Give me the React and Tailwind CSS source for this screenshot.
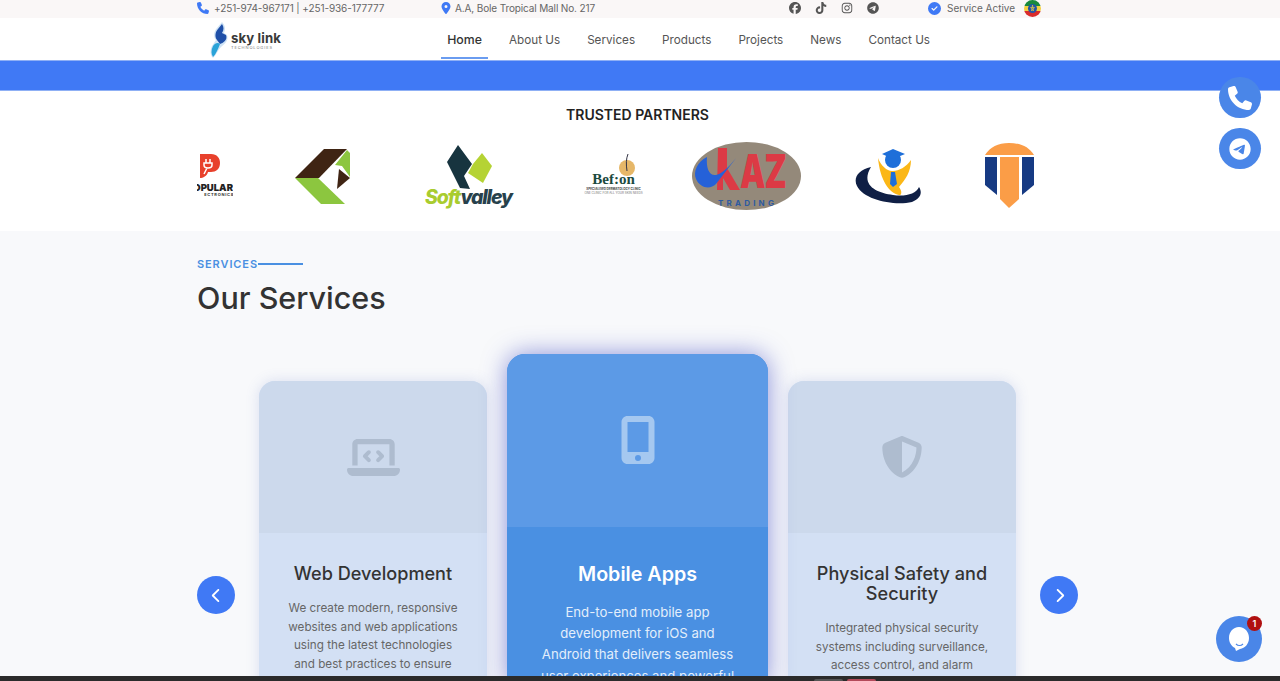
import { FaPhone, FaLocationDot, FaFacebook, FaTiktok, FaInstagram, FaTelegram, FaCircleCheck, FaLaptopCode, FaMobileScreenButton, FaShieldHalved, FaChevronLeft, FaChevronRight } from 'react-icons/fa6'

const navLinks = ['About Us', 'Services', 'Products', 'Projects', 'News', 'Contact Us']

function SkyLinkLogo() {
    return (
        <div className="flex items-center ml-[13px] w-[72px] pt-[2px]">
            <svg width="19" height="37" viewBox="0 0 19 37" className="shrink-0">
                <path d="M12 0 C15 3 16 7 14 11 L17 13 C19 18 15 22 11 25 C8 28 6 33 3 36 C0 33 0 28 2 24 L6 18 C3 15 4 9 7 6 Z" fill="#cfe3f5" />
                <path d="M12 2 C14 5 14 8 12 11 L16 13 C18 18 13 21 10 22 L7 18 C4 14 6 9 8 7 Z" fill="#1f4fa8" />
                <path d="M10 22 C8 27 6 32 3 35 C1 32 1 28 3 24 C5 21 8 20 10 22 Z" fill="#2aa3d8" />
            </svg>
            <div className="flex flex-col ml-[2px]">
                <span className="text-[13.2px] leading-[14px] font-bold text-[#3a3a3a] whitespace-nowrap tracking-[0.1px]">sky link</span>
                <span className="text-[4px] leading-[5px] tracking-[0.9px] text-[#777] whitespace-nowrap">TECHNOLOGIES</span>
            </div>
        </div>
    )
}

function PopularLogo() {
    return (
        <div className="relative w-[36px] h-[44px] overflow-hidden shrink-0">
            <svg width="20" height="24" viewBox="0 0 20 24" className="absolute left-[3px] top-0">
                <path d="M0 0 H11 C17 0 20 4 20 9 C20 15 16 18 11 18 L8 18 C7 22 3 24 0 24 Z" fill="#e8412c" />
                <path d="M6 5 V9 M10 5 V9 M4 9 H12 V11 C12 13 10 14 8 14 C6 14 4 13 4 11 Z M7 14 L4 20" stroke="#fff" strokeWidth="1.5" fill="none" />
            </svg>
            <span className="absolute right-0 top-[29px] text-[9.5px] leading-[9px] font-black text-[#222] whitespace-nowrap">OPULAR</span>
            <span className="absolute right-[-1px] top-[38px] text-[4px] leading-[5px] font-bold tracking-[0.7px] text-[#333] whitespace-nowrap">ECTRONICS</span>
        </div>
    )
}

function GreenLogo() {
    return (
        <svg width="56" height="57" viewBox="295 148 56 57" className="shrink-0">
            <polygon points="295,178 324,149 347,149 319,178" fill="#3f2413" />
            <polygon points="295,178 318,178 345,204 321,204" fill="#8cc63f" />
            <polygon points="347,150 350,153 350,177 342,166 335,165" fill="#8cc63f" />
            <polygon points="339,169 350,178 337,189" fill="#3f2413" />
        </svg>
    )
}

function SoftValleyLogo() {
    return (
        <div className="relative w-[88px] h-[65px] shrink-0">
            <svg width="88" height="46" viewBox="425 143 88 46" className="absolute left-0 top-0">
                <polygon points="458,144 472,163 464,175 470,188 460,187 447,161" fill="#17343f" />
                <polygon points="482,152 492,165 483,182 468,172 473,163" fill="#b5d334" />
            </svg>
            <span className="absolute left-0 top-[41px] text-[19.5px] leading-[24px] font-extrabold italic tracking-[-1.2px] whitespace-nowrap">
                <span className="text-[#a9cc2f]">Soft</span><span className="text-[#27414c]">valley</span>
            </span>
        </div>
    )
}

function BefonLogo() {
    return (
        <div className="relative w-[61px] h-[44px] flex flex-col items-center shrink-0">
            <svg width="20" height="22" viewBox="0 0 20 22" className="absolute left-[34px] top-0">
                <circle cx="10" cy="14" r="8" fill="#e6b768" />
                <path d="M11 0 C9 5 9 10 10 17" stroke="#334" strokeWidth="1" fill="none" />
            </svg>
            <span className="relative mt-[18px] text-[15px] leading-[15px] font-bold text-[#1c4a3f] font-['Liberation_Serif',serif] whitespace-nowrap">Bef:on</span>
            <span className="text-[3px] leading-[4px] font-bold text-[#444] whitespace-nowrap">SPECIALISED DERMATOLOGY CLINIC</span>
            <span className="text-[3px] leading-[4px] text-[#777] whitespace-nowrap">ONE CLINIC FOR ALL YOUR SKIN NEEDS</span>
        </div>
    )
}

function UazLogo() {
    return (
        <div className="relative w-[109px] h-[68px] rounded-[50%] overflow-hidden bg-[#94897a] shrink-0">
            <svg width="109" height="68" viewBox="0 0 109 68" className="absolute inset-0">
                <polygon points="26,6 35,6 35,26 48,48 38,48 31,36 31,48 25,48" fill="#dc3a45" />
                <path d="M15 15 C5 20 1 30 4 37 C8 46 18 48 24 42 L48 11 C38 24 30 32 24 33 C17 34 14 26 15 15 Z" fill="#2561d8" />
            </svg>
            <span className="absolute left-[48px] top-[15px] text-[32px] leading-[30px] font-black text-[#dc3a45] tracking-[-1px] whitespace-nowrap scale-y-[1.45]">AZ</span>
            <span className="absolute left-[26px] top-[56px] text-[8px] leading-[10px] font-bold tracking-[3.2px] text-[#2d5aa0] whitespace-nowrap">TRADING</span>
        </div>
    )
}

function GradLogo() {
    return (
        <svg width="67" height="57" viewBox="855 148 67 57" className="shrink-0">
            <path d="M871 167 C858 170 853 178 857 186 C864 200 894 206 912 202 C920 199 923 193 919 187 C916 194 905 197 893 195 C876 193 860 185 871 167 Z" fill="#0f1f45" />
            <path d="M878 158 C881 166 888 172 893 171 C899 171 906 167 911 160 C911 172 905 180 899 187 C903 192 901 196 899 195 C889 193 880 180 878 158 Z" fill="#fbb717" />
            <circle cx="893" cy="160" r="8" fill="#1e6fd9" />
            <polygon points="882,154 893,149 905,154 893,159" fill="#1e6fd9" />
            <polygon points="891,172 895,172 897,184 893,187 890,184" fill="#1e6fd9" />
        </svg>
    )
}

function TLogo() {
    return (
        <svg width="51" height="66" viewBox="984 143 51 66" className="shrink-0">
            <path d="M985 155 C990 147 998 143 1009 143 C1021 143 1029 147 1034 155 Z" fill="#fb9d47" />
            <polygon points="985,157 997,157 997,195 985,185" fill="#163a83" />
            <polygon points="1022,157 1034,157 1034,185 1022,195" fill="#163a83" />
            <polygon points="1000,157 1019,157 1019,199 1009,208 1000,199" fill="#fb9d47" />
        </svg>
    )
}

function ServiceCard({ icon, title, lines }) {
    return (
        <div className="w-[228px] mt-[27px] h-[330px] rounded-t-[16px] overflow-hidden bg-[#d3e0f4] shadow-[0_0_14px_rgba(80,100,190,0.18)] shrink-0">
            <div className="h-[152px] bg-[#ccd9ec] flex items-center justify-center text-[#aebccf]">
                {icon}
            </div>
            <div className="px-[20px] pt-[30px] flex flex-col items-center text-center">
                <h3 className="text-[18.1px] leading-[20px] font-medium text-[#333]">{title}</h3>
                <p className="mt-[16px] text-[11.7px] leading-[18.6px] text-[#666] whitespace-nowrap">
                    {lines.map((line) => <span key={line} className="block">{line}</span>)}
                </p>
            </div>
        </div>
    )
}

export default function App() {
    return (
        <div className="relative w-[1280px] h-[681px] overflow-hidden bg-white font-['Inter',sans-serif]">
            <main className="h-[676px] overflow-hidden">
                {/* Top bar */}
                <div className="h-[18px] bg-[#faf7f7] flex items-center pl-[197px] pb-[2px] text-[10px] text-[#666]">
                    <FaPhone className="text-[#3f79f5] text-[12px]" />
                    <span className="ml-[5px] w-[226px] whitespace-nowrap tracking-[-0.1px]">+251-974-967171 | +251-936-177777</span>
                    <FaLocationDot className="text-[#3f79f5] text-[12px]" />
                    <span className="ml-[3px] w-[334px] whitespace-nowrap tracking-[-0.13px]">A.A, Bole Tropical Mall No. 217</span>
                    <div className="flex items-center gap-[14px] text-[#555] text-[12px]">
                        <FaFacebook />
                        <FaTiktok />
                        <FaInstagram />
                        <FaTelegram />
                    </div>
                    <FaCircleCheck className="ml-[49px] text-[#3f79f5] text-[13px]" />
                    <span className="ml-[6px] w-[77px] whitespace-nowrap">Service Active</span>
                    <svg width="17" height="17" viewBox="0 0 17 17">
                        <clipPath id="flag"><circle cx="8.5" cy="8.5" r="8.5" /></clipPath>
                        <g clipPath="url(#flag)">
                            <rect width="17" height="6" fill="#1a8a3d" />
                            <rect y="6" width="17" height="5" fill="#f4d03f" />
                            <rect y="11" width="17" height="6" fill="#d92b2b" />
                            <circle cx="8.5" cy="8.5" r="4.5" fill="#2456a6" />
                            <path d="M8.5 5 L9.5 11 L6.5 7.5 H10.5 L7.5 11 Z" fill="none" stroke="#f4d03f" strokeWidth="0.6" />
                        </g>
                    </svg>
                </div>

                {/* Nav */}
                <nav className="h-[42px] bg-white flex pl-[197px]">
                    <SkyLinkLogo />
                    <div className="flex ml-[159px] gap-[15px] text-[11.7px] text-[#555]">
                        <a className="w-[47px] flex items-center justify-center h-[41px] pt-[6px] border-b-2 border-[#6a9cf0] text-[12.3px] font-medium text-[#333]">Home</a>
                        {navLinks.map((link) => (
                            <a key={link} className="px-[6px] h-[41px] pt-[4px] flex items-center whitespace-nowrap">{link}</a>
                        ))}
                    </div>
                </nav>

                {/* Blue band */}
                <div className="h-[31px] bg-[#4079f5] border-y border-[#8fb0f5]" />

                {/* Partners */}
                <section className="h-[140px] bg-white pt-[15px]">
                    <h2 className="w-[881px] ml-[197px] text-center text-[14px] leading-[18px] font-semibold text-[#222]">TRUSTED PARTNERS</h2>
                    <div className="flex items-center h-[68px] mt-[18px] pl-[197px]">
                        <PopularLogo />
                        <div className="ml-[62px]"><GreenLogo /></div>
                        <div className="ml-[74px]"><SoftValleyLogo /></div>
                        <div className="ml-[70px]"><BefonLogo /></div>
                        <div className="ml-[48px]"><UazLogo /></div>
                        <div className="ml-[54px]"><GradLogo /></div>
                        <div className="ml-[62px]"><TLogo /></div>
                    </div>
                </section>

                {/* Services */}
                <section className="h-[445px] bg-[#f8f9fb] px-[197px] pt-[26px]">
                    <div className="flex items-center text-[11px] leading-[14px] font-semibold tracking-[0.9px] text-[#4a90e2]">
                        SERVICES
                        <span className="w-[45px] h-[2px] bg-[#4a90e2]" />
                    </div>
                    <h2 className="mt-[7px] text-[30.5px] leading-[40px] font-medium text-[#333]">Our Services</h2>

                    <div className="flex justify-between mt-[36px] w-[881px]">
                        <button className="w-[38px] h-[38px] mt-[222px] rounded-full bg-[#4079f5] flex items-center justify-center text-white text-[15px]">
                            <FaChevronLeft />
                        </button>
                        <div className="flex items-start gap-[20px]">
                            <ServiceCard
                                icon={<FaLaptopCode className="text-[53px]" />}
                                title="Web Development"
                                lines={['We create modern, responsive', 'websites and web applications', 'using the latest technologies', 'and best practices to ensure']}
                            />
                            <div className="relative z-10 w-[261px] h-[330px] rounded-t-[18px] overflow-hidden bg-[#4a90e2] shadow-[0_0_25px_rgba(50,60,190,0.55)] shrink-0">
                                <div className="h-[173px] bg-[#5c9ae6] flex items-center justify-center text-[#a5c8f0]">
                                    <FaMobileScreenButton className="text-[48px] mb-[2px]" />
                                </div>
                                <div className="pt-[34px] flex flex-col items-center text-center text-white">
                                    <h3 className="text-[19.7px] leading-[26px] font-semibold">Mobile Apps</h3>
                                    <p className="mt-[15px] text-[13.2px] leading-[21.2px] text-[#e3eefb] whitespace-nowrap">
                                        <span className="block">End-to-end mobile app</span>
                                        <span className="block">development for iOS and</span>
                                        <span className="block">Android that delivers seamless</span>
                                        <span className="block">user experiences and powerful</span>
                                    </p>
                                </div>
                            </div>
                            <ServiceCard
                                icon={<FaShieldHalved className="text-[42px]" />}
                                title={<>Physical Safety and<br />Security</>}
                                lines={['Integrated physical security', 'systems including surveillance,', 'access control, and alarm']}
                            />
                        </div>
                        <button className="w-[38px] h-[38px] mt-[222px] rounded-full bg-[#4079f5] flex items-center justify-center text-white text-[15px]">
                            <FaChevronRight />
                        </button>
                    </div>
                </section>
            </main>

            {/* Window strip at the bottom */}
            <div className="h-[5px] bg-[#2b2b2b] flex items-end pl-[814px] gap-[4px]">
                <span className="w-[29px] h-[2px] bg-[#555] rounded-t-sm" />
                <span className="w-[29px] h-[2px] bg-[#b34a5a] rounded-t-sm" />
            </div>

            {/* Floating buttons */}
            <a className="absolute left-[1219px] top-[77px] w-[42px] h-[41px] rounded-full bg-[#4a86e8] flex items-center justify-center text-white text-[24px]">
                <FaPhone />
            </a>
            <a className="absolute left-[1219px] top-[128px] w-[42px] h-[41px] rounded-full bg-[#4a86e8] flex items-center justify-center text-white text-[22px]">
                <FaTelegram />
            </a>
            <a className="absolute left-[1216px] top-[616px] w-[46px] h-[46px] rounded-full bg-[#4a86e8] flex items-center justify-center">
                <svg width="24" height="26" viewBox="0 0 24 26">
                    <path d="M12 1 C18 1 22 6 22 12 C22 18 18 22 13 23 L9 25 L8 22 C4 20 2 16 2 12 C2 6 6 1 12 1 Z" fill="#fff" />
                    <path d="M9 18 C11 20 14 20 16 18" stroke="#4a86e8" strokeWidth="1.2" fill="none" />
                </svg>
            </a>
            <span className="absolute left-[1247px] top-[616px] w-[15px] h-[15px] rounded-full bg-[#b01010] text-white text-[9px] font-semibold flex items-center justify-center">1</span>
        </div>
    )
}
